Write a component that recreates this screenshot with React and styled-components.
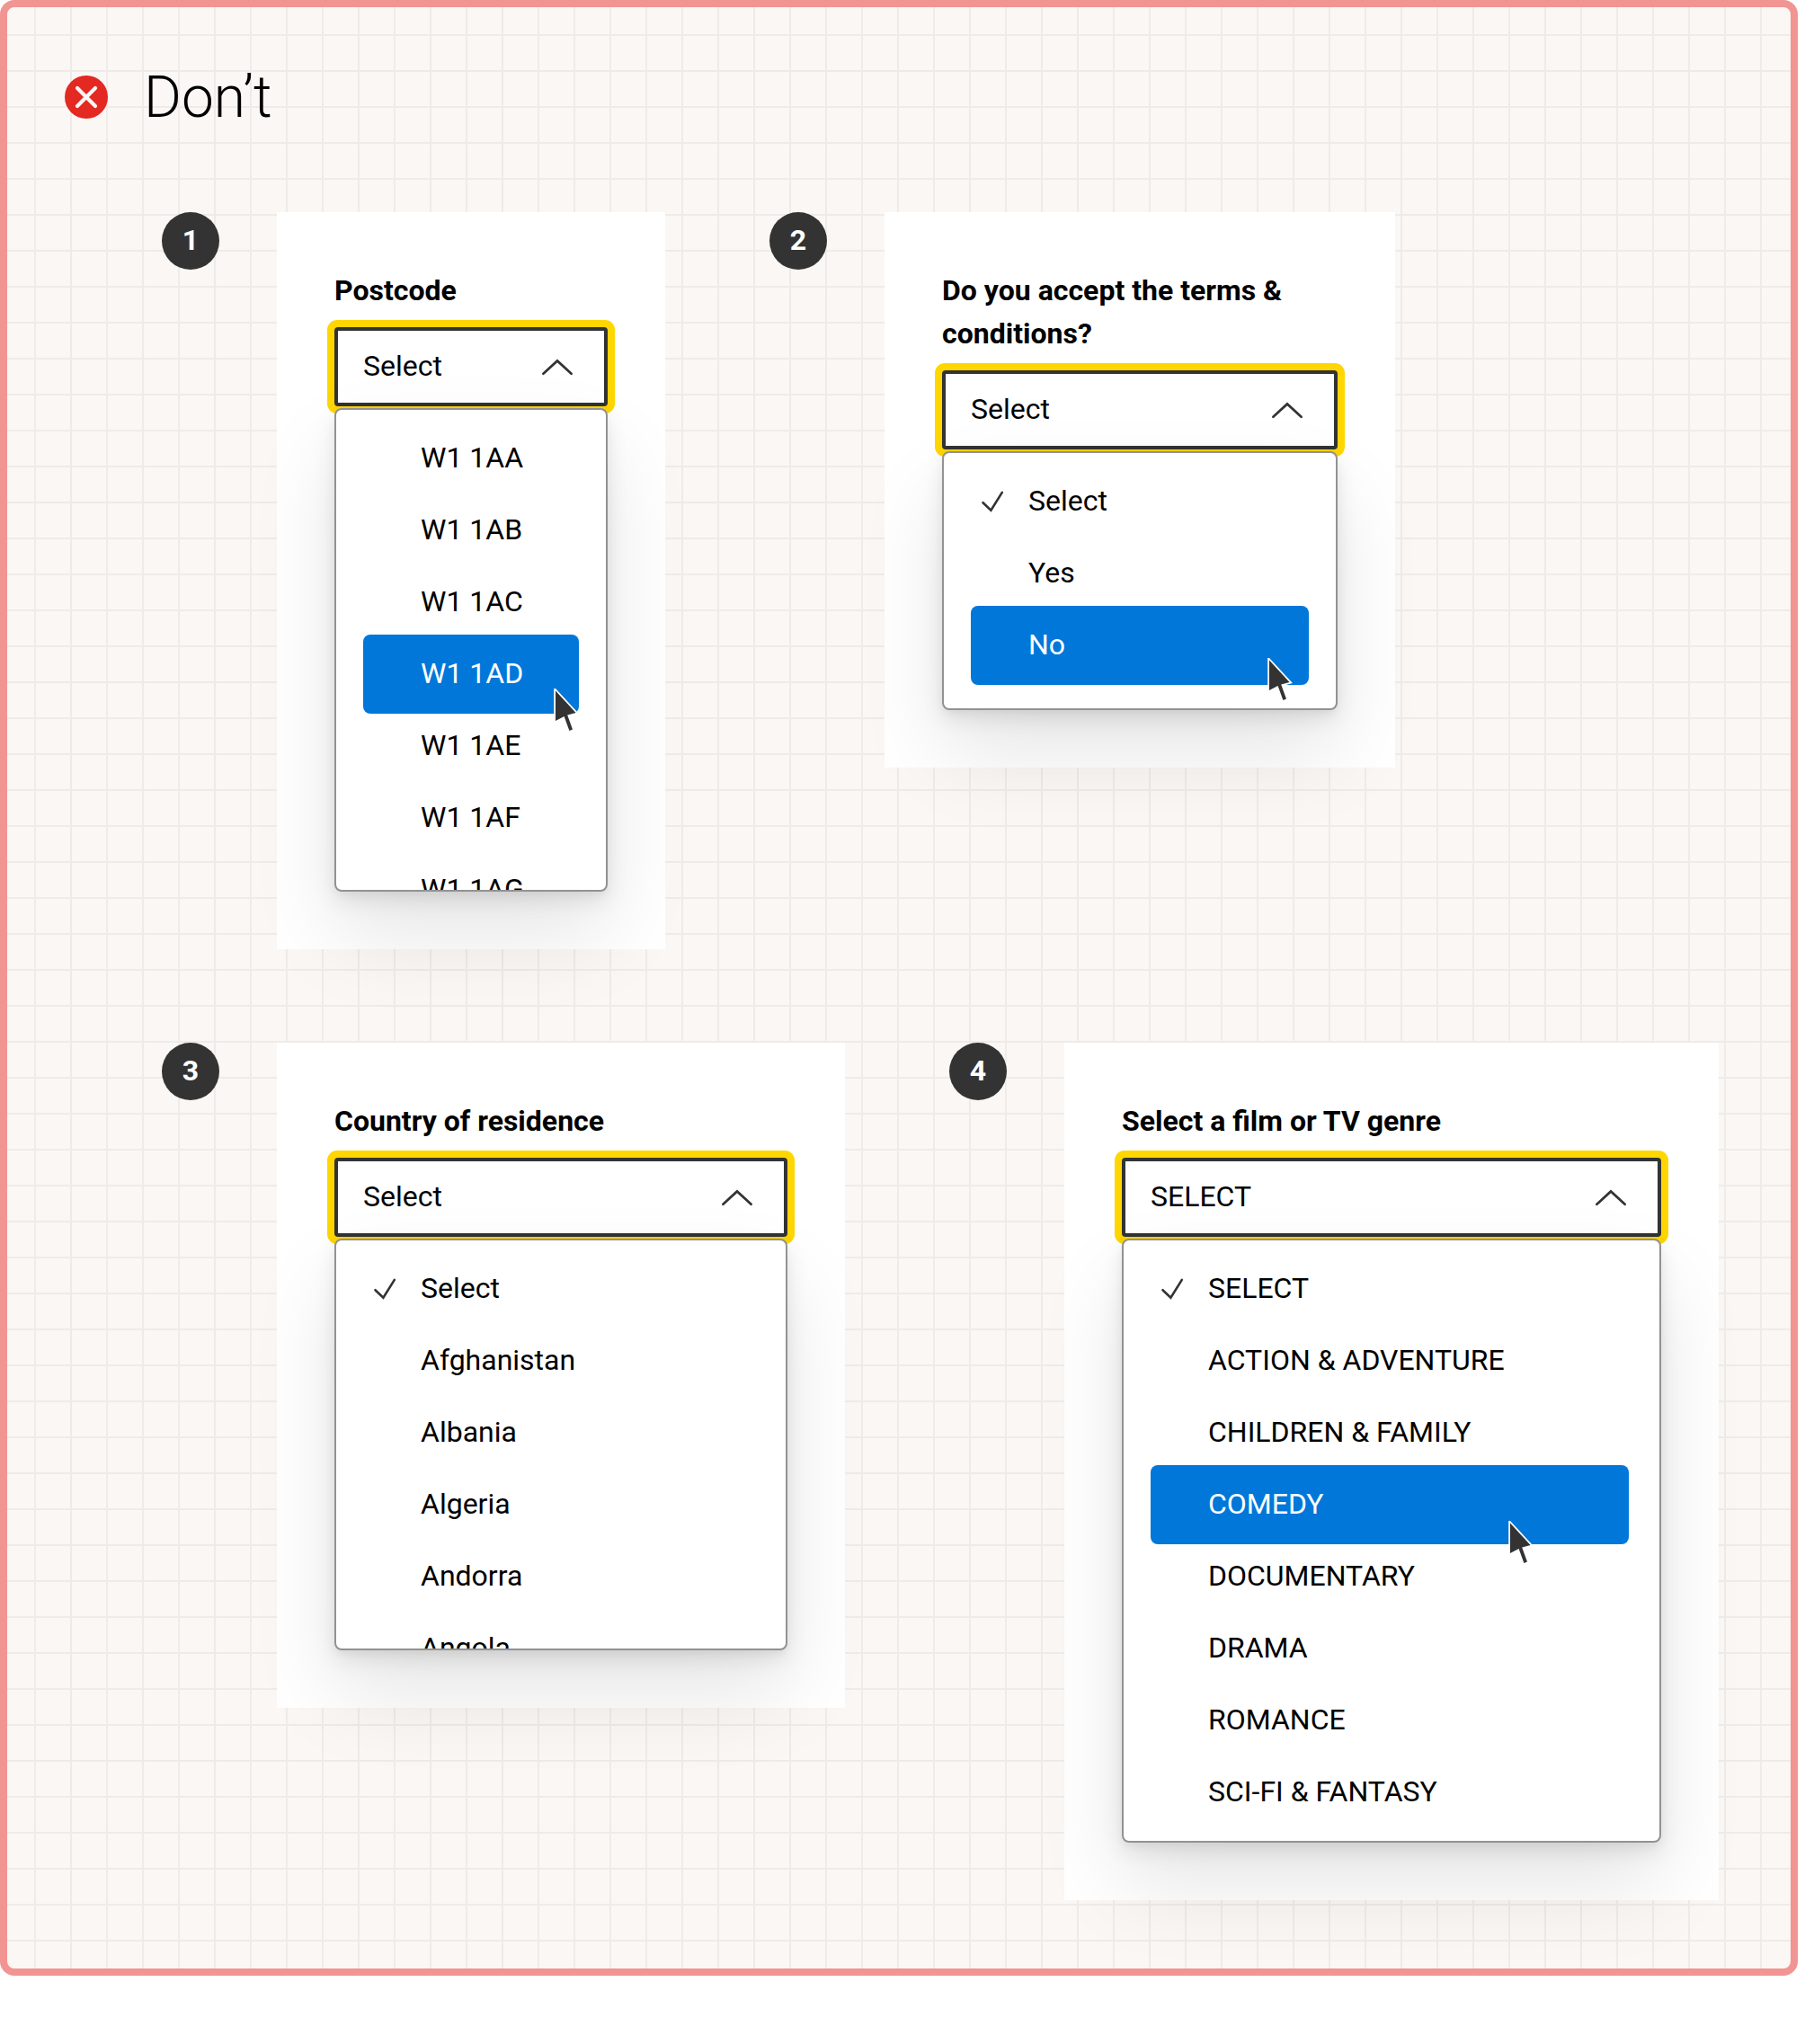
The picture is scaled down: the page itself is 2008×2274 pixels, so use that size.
import React from "react";
import styled, { createGlobalStyle, css } from "styled-components";

const GlobalStyle = createGlobalStyle`
  *, *::before, *::after { box-sizing: border-box; }
  body {
    margin: 0;
    background: #fff;
    color: #000;
    font-family: Roboto, "Liberation Sans", sans-serif;
    font-size: 32px;
    line-height: 48px;
  }
`;

const Frame = styled.main`
  width: 2000px;
  height: 2198px;
  padding: 64px 0 0 64px;
  border: 8px solid #f19492;
  border-radius: 16px;
  background-color: #fbf7f4;
  background-image:
    linear-gradient(to right, #efebe8 2px, transparent 2px),
    linear-gradient(to bottom, #efebe8 2px, transparent 2px);
  background-size: 40px 40px;
  background-position: 30px 30px;
`;

const Header = styled.header`
  display: flex;
  align-items: center;
  gap: 40px;
  height: 72px;
`;

const Title = styled.h1`
  margin: 0;
  padding-top: 2px;
  font-size: 64px;
  font-weight: 300;
  line-height: 72px;
`;

const Examples = styled.div`
  display: flex;
  flex-direction: column;
  gap: 104px;
  padding: 92px 0 0 108px;
`;

const ExampleRow = styled.div`
  display: flex;
  align-items: flex-start;
  gap: 116px;
`;

const Example = styled.section`
  display: flex;
  align-items: flex-start;
  gap: 64px;
`;

const Badge = styled.div`
  display: flex;
  align-items: center;
  justify-content: center;
  width: 64px;
  height: 64px;
  padding-bottom: 2px;
  border-radius: 50%;
  background: #333;
  color: #fff;
  font-weight: 700;
`;

const Card = styled.div`
  width: ${(p) => p.$width}px;
  padding: 63px 64px 64px;
  background: #fff;
`;

const Label = styled.div`
  margin-bottom: 17px;
  font-weight: 700;
`;

const SelectBox = styled.div`
  display: flex;
  align-items: center;
  justify-content: space-between;
  height: 88px;
  padding: 0 34px 2px 28px;
  border: 4px solid #333;
  border-radius: 4px;
  background: #fff;
  box-shadow: 0 0 0 8px #ffd600;
`;

const Menu = styled.ul`
  position: relative;
  height: ${(p) => p.$height}px;
  margin: 2px 0 0;
  padding: 14px ${(p) => p.$inset - 2}px 0 30px;
  overflow: hidden;
  list-style: none;
  background: #fff;
  border: 2px solid #929292;
  border-radius: 8px;
  box-shadow:
    0 4px 8px rgba(0, 0, 0, 0.04),
    0 10px 24px rgba(0, 0, 0, 0.09),
    0 48px 96px rgba(0, 0, 0, 0.1);
`;

const Option = styled.li`
  display: flex;
  align-items: center;
  position: relative;
  height: 80px;
  padding-bottom: 2px;
  white-space: nowrap;
  ${(p) =>
    p.$active &&
    css`
      z-index: 1;
      height: 88px;
      margin: -4px 0;
      border-radius: 8px;
      background: #0077d9;
      color: #fff;
    `}
`;

const Mark = styled.span`
  display: flex;
  flex: none;
  width: 64px;
  height: 80px;
`;

const Pointer = styled.svg`
  position: absolute;
  left: ${(p) => p.$x}px;
  top: ${(p) => p.$y}px;
`;

const CrossIcon = () => (
  <svg width="48" height="48" viewBox="0 0 48 48" fill="none">
    <circle cx="24" cy="24" r="24" fill="#e42822" />
    <path d="M14 14L34 34M34 14L14 34" stroke="#fbf7f4" strokeWidth="4.2" strokeLinecap="round" />
  </svg>
);

const ChevronUp = () => (
  <svg width="36" height="22" viewBox="0 0 36 22" fill="none">
    <path d="M2.4 19.8L18 5.4L33.6 19.8" stroke="#333" strokeWidth="2.7" strokeLinecap="round" />
  </svg>
);

const Check = () => (
  <svg width="64" height="80" viewBox="0 0 64 80" fill="none">
    <path d="M13.5 42.2L22.4 50.8L34.8 30.9" stroke="#333" strokeWidth="2.6" strokeLinecap="round" />
  </svg>
);

const Cursor = ({ x, y }) => (
  <Pointer $x={x} $y={y} width="30" height="52" viewBox="0 0 30 52">
    <path
      d="M2 2.6V36L11.6 31L17.4 47L21 45.6L15.2 29.5L24.6 27Z"
      fill="#333"
      stroke="#fff"
      strokeWidth="3.6"
      paintOrder="stroke"
    />
  </Pointer>
);

const EXAMPLE_ROWS = [
  [
    {
      number: 1,
      width: 432,
      label: "Postcode",
      value: "Select",
      menuHeight: 538,
      active: "W1 1AD",
      cursor: { x: 212, y: 60 },
      options: ["W1 1AA", "W1 1AB", "W1 1AC", "W1 1AD", "W1 1AE", "W1 1AF", "W1 1AG"],
    },
    {
      number: 2,
      width: 568,
      label: "Do you accept the terms & conditions?",
      value: "Select",
      menuHeight: 288,
      active: "No",
      cursor: { x: 330, y: 58 },
      options: ["Select", "Yes", "No"],
    },
  ],
  [
    {
      number: 3,
      width: 632,
      label: "Country of residence",
      value: "Select",
      menuHeight: 458,
      options: ["Select", "Afghanistan", "Albania", "Algeria", "Andorra", "Angola"],
    },
    {
      number: 4,
      width: 728,
      label: "Select a film or TV genre",
      value: "SELECT",
      menuHeight: 672,
      inset: 36,
      active: "COMEDY",
      cursor: { x: 398, y: 62 },
      options: [
        "SELECT",
        "ACTION & ADVENTURE",
        "CHILDREN & FAMILY",
        "COMEDY",
        "DOCUMENTARY",
        "DRAMA",
        "ROMANCE",
        "SCI-FI & FANTASY",
      ],
    },
  ],
];

const SelectExample = ({ number, width, label, value, menuHeight, inset = 32, active, cursor, options }) => (
  <Example>
    <Badge>{number}</Badge>
    <Card $width={width}>
      <Label>{label}</Label>
      <SelectBox>
        {value}
        <ChevronUp />
      </SelectBox>
      <Menu $height={menuHeight} $inset={inset}>
        {options.map((option) => (
          <Option key={option} $active={option === active}>
            <Mark>{option === value && <Check />}</Mark>
            {option}
            {option === active && <Cursor {...cursor} />}
          </Option>
        ))}
      </Menu>
    </Card>
  </Example>
);

export default function App() {
  return (
    <>
      <GlobalStyle />
      <Frame>
        <Header>
          <CrossIcon />
          <Title>Don’t</Title>
        </Header>
        <Examples>
          {EXAMPLE_ROWS.map((row, index) => (
            <ExampleRow key={index}>
              {row.map((example) => (
                <SelectExample key={example.number} {...example} />
              ))}
            </ExampleRow>
          ))}
        </Examples>
      </Frame>
    </>
  );
}
